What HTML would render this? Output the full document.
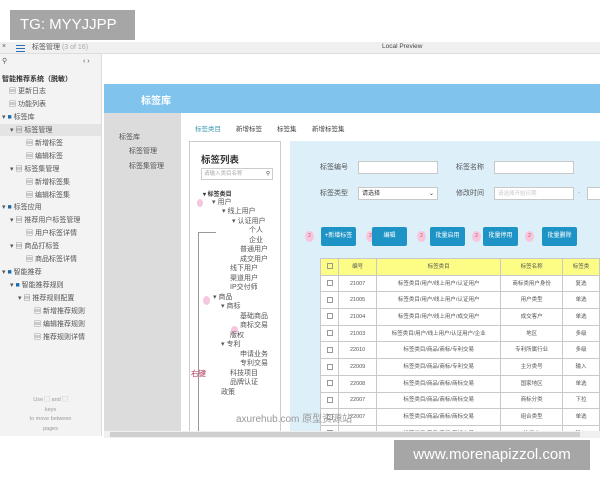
<!DOCTYPE html>
<html><head><meta charset="utf-8"><style>
*{margin:0;padding:0;box-sizing:border-box}
body{width:600px;height:480px;overflow:hidden;background:#fff;font-family:"Liberation Sans","Noto Sans CJK SC",sans-serif;position:relative;color:#333}
.a{position:absolute;white-space:nowrap}
.s{font-size:7px;color:#555;line-height:8px}
.btn{position:absolute;top:227px;height:19px;width:35px;background:#1e94c6;border-radius:2px;color:#fff;font-size:6px;text-align:center;line-height:19px}
.pin{position:absolute;top:231px;width:9px;height:11px;background:#f6c6de;border-radius:50%;font-size:5px;color:#c55;text-align:center;line-height:10px}
.inp{position:absolute;height:13px;background:#fff;border:1px solid #c8c8c8}
table{position:absolute;left:320px;top:258px;border-collapse:collapse;font-size:5.5px;color:#555;table-layout:fixed}
td{border:1px solid #c9c9c9;height:16.7px;line-height:8px;text-align:center;background:#fff;padding:0;overflow:hidden;white-space:nowrap}
tr.h td{background:#fdfd86}
.cb{display:inline-block;width:6px;height:6px;border:1px solid #999;vertical-align:middle}
</style></head><body>
<div class="a" style="left:0;top:42px;width:600px;height:12px;background:#f0f0f0;border-bottom:1px solid #ddd"></div>
<div class="a s" style="left:2px;top:43px">×</div>
<div class="a" style="left:16px;top:45px;width:9px;height:1px;background:#2a6fb5;box-shadow:0 3px 0 #2a6fb5,0 6px 0 #2a6fb5"></div>
<div class="a s" style="left:32px;top:44px">标签管理 <span style="color:#aaa">(3 of 16)</span></div>
<div class="a" style="left:382px;top:43px;font-size:6.5px;color:#444">Local Preview</div>
<div class="a" style="left:0;top:54px;width:102px;height:382px;background:#f3f3f3;border-right:1px solid #ddd"></div>
<div class="a s" style="left:2px;top:58px">⚲</div>
<div class="a s" style="left:83px;top:58px">‹ ›</div>
<div class="a" style="left:2px;top:74px;font-size:7px;font-weight:bold;color:#333">智能推荐系统（脱敏）</div>
<div class="a" style="left:0;top:124px;width:101px;height:12px;background:#e4e4e4"></div>
<div class="a s" style="left:9px;top:88px">▤ 更新日志</div>
<div class="a s" style="left:9px;top:101px">▤ 功能列表</div>
<div class="a s" style="left:2px;top:114px">▾ <span style="color:#1a6aa8">■</span> 标签库</div>
<div class="a s" style="left:10px;top:127px">▾ ▤ 标签管理</div>
<div class="a s" style="left:26px;top:140px">▤ 新增标签</div>
<div class="a s" style="left:26px;top:153px">▤ 编辑标签</div>
<div class="a s" style="left:10px;top:166px">▾ ▤ 标签集管理</div>
<div class="a s" style="left:26px;top:179px">▤ 新增标签集</div>
<div class="a s" style="left:26px;top:192px">▤ 编辑标签集</div>
<div class="a s" style="left:2px;top:204px">▾ <span style="color:#1a6aa8">■</span> 标签应用</div>
<div class="a s" style="left:10px;top:217px">▾ ▤ 推荐用户标签管理</div>
<div class="a s" style="left:26px;top:230px">▤ 用户标签详情</div>
<div class="a s" style="left:10px;top:243px">▾ ▤ 商品打标签</div>
<div class="a s" style="left:26px;top:256px">▤ 商品标签详情</div>
<div class="a s" style="left:2px;top:269px">▾ <span style="color:#1a6aa8">■</span> 智能推荐</div>
<div class="a s" style="left:10px;top:282px">▾ <span style="color:#1a6aa8">■</span> 智能推荐规则</div>
<div class="a s" style="left:18px;top:295px">▾ ▤ 推荐规则配置</div>
<div class="a s" style="left:34px;top:308px">▤ 新增推荐规则</div>
<div class="a s" style="left:34px;top:321px">▤ 编辑推荐规则</div>
<div class="a s" style="left:34px;top:334px">▤ 推荐规则详情</div>
<div class="a" style="left:0;top:396px;width:101px;text-align:center;font-size:5.5px;color:#999;line-height:9.5px;white-space:normal">Use ▢ and ▢<br>keys<br>to move between<br>pages</div>
<div class="a" style="left:104px;top:84px;width:496px;height:29px;background:#80c4ee"></div>
<div class="a" style="left:141px;top:92px;font-size:10px;color:#fff;font-weight:bold">标签库</div>
<div class="a" style="left:104px;top:113px;width:77px;height:320px;background:#dcdcdc"></div>
<div class="a s" style="left:119px;top:134px">标签库</div>
<div class="a s" style="left:129px;top:148px">标签管理</div>
<div class="a s" style="left:129px;top:163px">标签集管理</div>
<div class="a" style="left:195px;top:123px;font-size:6.5px;color:#3a9bb0">标签类目</div>
<div class="a" style="left:236px;top:123px;font-size:6.5px;color:#444">新增标签</div>
<div class="a" style="left:277px;top:123px;font-size:6.5px;color:#444">标签集</div>
<div class="a" style="left:312px;top:123px;font-size:6.5px;color:#444">新增标签集</div>
<div class="a" style="left:189px;top:141px;width:92px;height:295px;border:1px solid #ccc;background:#fff"></div>
<div class="a" style="left:201px;top:152px;font-size:9.5px;font-weight:bold;color:#333">标签列表</div>
<div class="a" style="left:201px;top:168px;width:72px;height:12px;border:1px solid #ccc;font-size:5.5px;color:#aaa;padding:2px 2px;line-height:7px">请输入类目名称 <span style="float:right;color:#444">⚲</span></div>
<div class="a" style="left:198px;top:232px;width:1px;height:204px;background:#999"></div>
<div class="a" style="left:198px;top:232px;width:18px;height:1px;background:#999"></div>
<div class="a" style="left:203px;top:189px;font-size:6px;font-weight:bold">▾ 标签类目</div>
<div class="a" style="left:197px;top:199px;width:6px;height:8px;background:#f6c6de;border-radius:50%"></div>
<div class="a s" style="left:212px;top:199px">▾ 用户</div>
<div class="a s" style="left:222px;top:208px">▾ 线上用户</div>
<div class="a s" style="left:232px;top:218px">▾ 认证用户</div>
<div class="a s" style="left:249px;top:227px">个人</div>
<div class="a s" style="left:249px;top:237px">企业</div>
<div class="a s" style="left:240px;top:246px">普通用户</div>
<div class="a s" style="left:240px;top:256px">成交用户</div>
<div class="a s" style="left:230px;top:265px">线下用户</div>
<div class="a s" style="left:230px;top:275px">渠道用户</div>
<div class="a s" style="left:230px;top:284px">IP交付师</div>
<div class="a" style="left:203px;top:296px;width:7px;height:9px;background:#f6c6de;border-radius:50%"></div>
<div class="a s" style="left:213px;top:294px">▾ 商品</div>
<div class="a s" style="left:221px;top:303px">▾ 商标</div>
<div class="a s" style="left:240px;top:313px">基础商品</div>
<div class="a" style="left:231px;top:326px;width:7px;height:8px;background:#f6c6de;border-radius:50%"></div>
<div class="a s" style="left:240px;top:322px">商标交易</div>
<div class="a s" style="left:230px;top:332px">版权</div>
<div class="a s" style="left:221px;top:341px">▾ 专利</div>
<div class="a s" style="left:240px;top:351px">申请业务</div>
<div class="a s" style="left:240px;top:360px">专利交易</div>
<div class="a" style="left:191px;top:368px;font-size:7.5px;color:#b03050">右键</div>
<div class="a s" style="left:230px;top:370px">科技项目</div>
<div class="a s" style="left:230px;top:379px">品牌认证</div>
<div class="a s" style="left:221px;top:389px">政策</div>
<div class="a" style="left:290px;top:141px;width:310px;height:292px;background:#ddf0fa"></div>
<div class="a s" style="left:320px;top:164px">标签编号</div>
<div class="inp" style="left:358px;top:161px;width:80px"></div>
<div class="a s" style="left:456px;top:164px">标签名称</div>
<div class="inp" style="left:494px;top:161px;width:80px"></div>
<div class="a s" style="left:320px;top:190px">标签类型</div>
<div class="inp" style="left:358px;top:187px;width:80px;font-size:6px;padding:2px 3px;color:#333;line-height:8px">请选择<span style="float:right">⌄</span></div>
<div class="a s" style="left:456px;top:190px">修改时间</div>
<div class="inp" style="left:494px;top:187px;width:80px;font-size:5.5px;padding:2px 3px;color:#ccc;line-height:8px">请选择开始日期</div>
<div class="a s" style="left:578px;top:190px;color:#aaa">-</div>
<div class="inp" style="left:587px;top:187px;width:20px"></div>
<div class="pin" style="left:305px">2</div><div class="btn" style="left:321px">+新增标签</div>
<div class="pin" style="left:366px">2</div><div class="btn" style="left:372px">编辑</div>
<div class="pin" style="left:417px">2</div><div class="btn" style="left:430px">批量启用</div>
<div class="pin" style="left:472px">2</div><div class="btn" style="left:483px">批量停用</div>
<div class="pin" style="left:525px">2</div><div class="btn" style="left:542px">批量删除</div>
<table>
<colgroup><col style="width:20px"><col style="width:41px"><col style="width:129px"><col style="width:65px"><col style="width:40px"></colgroup>
<tr class="h"><td><span class="cb"></span></td><td>编号</td><td>标签类目</td><td>标签名称</td><td>标签类</td></tr>
<tr><td><span class="cb"></span></td><td>21007</td><td>标签类目/用户/线上用户/认证用户</td><td>商标类用户身份</td><td>复选</td></tr>
<tr><td><span class="cb"></span></td><td>21005</td><td>标签类目/用户/线上用户/认证用户</td><td>用户类型</td><td>单选</td></tr>
<tr><td><span class="cb"></span></td><td>21004</td><td>标签类目/用户/线上用户/成交用户</td><td>成交客户</td><td>单选</td></tr>
<tr><td><span class="cb"></span></td><td>21003</td><td>标签类目/用户/线上用户/认证用户/企业</td><td>地区</td><td>多级</td></tr>
<tr><td><span class="cb"></span></td><td>22010</td><td>标签类目/商品/商标/专利交易</td><td>专利所属行业</td><td>多级</td></tr>
<tr><td><span class="cb"></span></td><td>22009</td><td>标签类目/商品/商标/专利交易</td><td>主分类号</td><td>输入</td></tr>
<tr><td><span class="cb"></span></td><td>22008</td><td>标签类目/商品/商标/商标交易</td><td>国家地区</td><td>单选</td></tr>
<tr><td><span class="cb"></span></td><td>22007</td><td>标签类目/商品/商标/商标交易</td><td>商标分类</td><td>下拉</td></tr>
<tr><td><span class="cb"></span></td><td>22007</td><td>标签类目/商品/商标/商标交易</td><td>组合类型</td><td>单选</td></tr>
<tr><td><span class="cb"></span></td><td>22005</td><td>标签类目/商品/商标/商标交易</td><td>注册人</td><td>输入</td></tr>
</table>
<div class="a" style="left:236px;top:410px;font-size:10px;color:#999">axurehub.com 原型资源站</div>
<div class="a" style="left:104px;top:431px;width:496px;height:7px;background:#f0f0f0"></div>
<div class="a" style="left:110px;top:432px;width:470px;height:5px;background:#cfcfcf"></div>
<div class="a" style="left:0;top:438px;width:600px;height:42px;background:#fff"></div>
<div class="a" style="left:10px;top:10px;width:125px;height:30px;background:#a6a6a6;color:#fff;font-size:15px;line-height:30px;padding-left:10px">TG: MYYJJPP</div>
<div class="a" style="left:394px;top:440px;width:196px;height:30px;background:#a6a6a6;color:#fff;font-size:15px;line-height:30px;text-align:center">www.morenapizzol.com</div>
</body></html>
